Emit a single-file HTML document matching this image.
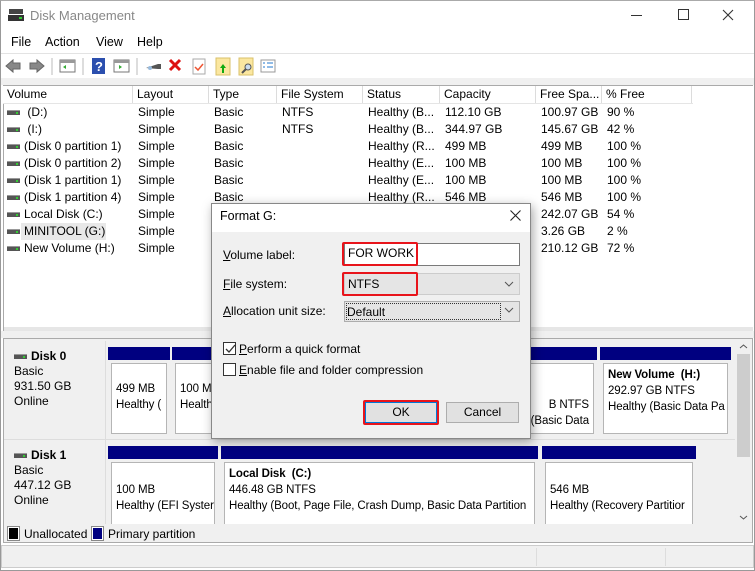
<!DOCTYPE html>
<html><head><meta charset="utf-8"><style>
*{margin:0;padding:0;box-sizing:border-box}
body{width:755px;height:571px;overflow:hidden;background:#fff;font-family:"Liberation Sans",sans-serif;font-size:12px;color:#000;position:relative}
.a{position:absolute;white-space:nowrap}
.hd{position:absolute;top:86px;height:18px;border-right:1px solid #dcdcdc;padding-left:4px;line-height:17px;background:#fff}
.row{position:absolute;left:0;width:735px;height:17px;line-height:17px}
.row span{position:absolute}
.di{display:inline-block;width:13px;height:5px;background:#555;border-top:1px solid #999;position:relative;margin-right:4px;vertical-align:middle}
.di:after{content:"";position:absolute;right:2px;top:1px;width:2px;height:2px;background:#3c3}
.bar{position:absolute;height:14px;background:#000080}
.box{position:absolute;background:#fff;border:1px solid #b5b5b5;outline:3px solid #f0f0f0;padding:3px 4px;line-height:16px;overflow:hidden;white-space:nowrap;font-size:11.5px;letter-spacing:-0.1px}
.dl{position:absolute;background:#f0f0f0;line-height:15px;padding:8px 0 0 9px}
u{text-decoration:underline}
</style></head><body>
<!-- title -->
<div class="a" style="left:8px;top:9px;width:16px;height:14px">
<div style="position:absolute;left:1px;top:0;width:14px;height:5px;background:#444"></div>
<div style="position:absolute;left:0;top:6px;width:16px;height:6px;background:#333"></div>
<div style="position:absolute;left:11px;top:8px;width:3px;height:2px;background:#3c3"></div></div>
<div class="a" style="left:30px;top:8px;font-size:13px;color:#888">Disk Management</div>
<div class="a" style="left:631px;top:15px;width:11px;height:1px;background:#333"></div>
<div class="a" style="left:678px;top:9px;width:11px;height:11px;border:1px solid #333"></div>
<svg class="a" style="left:722px;top:9px" width="12" height="12"><path d="M1 1 L11 11 M11 1 L1 11" stroke="#333" stroke-width="1.1"/></svg>
<!-- menu -->
<div class="a" style="left:11px;top:35px;font-size:12.5px">File</div>
<div class="a" style="left:45px;top:35px;font-size:12.5px">Action</div>
<div class="a" style="left:96px;top:35px;font-size:12.5px">View</div>
<div class="a" style="left:137px;top:35px;font-size:12.5px">Help</div>
<div class="a" style="left:0;top:53px;width:755px;height:1px;background:#e3e3e3"></div>
<!-- toolbar -->
<svg class="a" style="left:0;top:54px" width="300" height="24">
<path d="M6 12 l7-6 v3 h7 v6 h-7 v3z" fill="#888" stroke="#666"/>
<path d="M44 12 l-7-6 v3 h-7 v6 h7 v3z" fill="#888" stroke="#666"/>
<line x1="52" y1="4" x2="52" y2="21" stroke="#bbb"/>
<rect x="60" y="6" width="15" height="12" fill="#fff" stroke="#777"/><rect x="60" y="6" width="15" height="3" fill="#999"/><path d="M66 11 l-3 2 3 2z" fill="#3a3"/>
<line x1="83" y1="4" x2="83" y2="21" stroke="#bbb"/>
<rect x="92" y="4" width="13" height="16" fill="#2b4fae"/><text x="95" y="17" font-size="13" font-weight="bold" fill="#fff" font-family="Liberation Sans">?</text>
<rect x="114" y="6" width="15" height="12" fill="#fff" stroke="#777"/><rect x="114" y="6" width="15" height="3" fill="#999"/><path d="M119 11 l3 2 -3 2z" fill="#3a3"/>
<line x1="137" y1="4" x2="137" y2="21" stroke="#bbb"/>
<path d="M146 14 l12-4 h3 v5 h-3z" fill="#555"/><circle cx="150" cy="14" r="2" fill="#9bd"/>
<path d="M170 6 l10 10 M180 6 l-10 10" stroke="#d11" stroke-width="3"/>
<rect x="193" y="5" width="12" height="15" fill="#fff" stroke="#aaa"/><path d="M195 13 l3 3 5-6" stroke="#e53" fill="none" stroke-width="1.5"/>
<rect x="216" y="4" width="14" height="17" fill="#fbe7a0" stroke="#d9c06a"/><path d="M223 10 l-3 4 h2 v5 h2 v-5 h2z" fill="#1a1"/>
<rect x="239" y="4" width="14" height="17" fill="#fbe7a0" stroke="#d9c06a"/><circle cx="248" cy="13" r="3" fill="#cde" stroke="#555"/><line x1="246" y1="15" x2="242" y2="19" stroke="#555" stroke-width="2"/>
<rect x="261" y="6" width="14" height="12" fill="#fff" stroke="#999"/><path d="M263 9 h2 M263 13 h2 M267 9 h6 M267 13 h6" stroke="#27c"/>
</svg>
<div class="a" style="left:0;top:78px;width:755px;height:7px;background:#f0f0f0"></div>
<!-- list -->
<div class="a" style="left:3px;top:85px;width:750px;height:246px;border:1px solid #aaa;border-right:0"></div>
<div class="hd" style="left:3px;width:130px">Volume</div>
<div class="hd" style="left:133px;width:76px">Layout</div>
<div class="hd" style="left:209px;width:68px">Type</div>
<div class="hd" style="left:277px;width:86px">File System</div>
<div class="hd" style="left:363px;width:77px">Status</div>
<div class="hd" style="left:440px;width:96px">Capacity</div>
<div class="hd" style="left:536px;width:66px">Free Spa...</div>
<div class="hd" style="left:602px;width:90px">% Free</div>
<div class="a" style="left:3px;top:103px;width:690px;height:1px;background:#e5e5e5"></div>
<div class="row" style="top:104px"><span style="left:7px"><i class="di"></i>&nbsp;(D:)</span><span style="left:138px">Simple</span><span style="left:214px">Basic</span><span style="left:282px">NTFS</span><span style="left:368px">Healthy (B...</span><span style="left:445px">112.10 GB</span><span style="left:541px">100.97 GB</span><span style="left:607px">90 %</span></div>
<div class="row" style="top:121px"><span style="left:7px"><i class="di"></i>&nbsp;(I:)</span><span style="left:138px">Simple</span><span style="left:214px">Basic</span><span style="left:282px">NTFS</span><span style="left:368px">Healthy (B...</span><span style="left:445px">344.97 GB</span><span style="left:541px">145.67 GB</span><span style="left:607px">42 %</span></div>
<div class="row" style="top:138px"><span style="left:7px"><i class="di"></i>(Disk 0 partition 1)</span><span style="left:138px">Simple</span><span style="left:214px">Basic</span><span style="left:368px">Healthy (R...</span><span style="left:445px">499 MB</span><span style="left:541px">499 MB</span><span style="left:607px">100 %</span></div>
<div class="row" style="top:155px"><span style="left:7px"><i class="di"></i>(Disk 0 partition 2)</span><span style="left:138px">Simple</span><span style="left:214px">Basic</span><span style="left:368px">Healthy (E...</span><span style="left:445px">100 MB</span><span style="left:541px">100 MB</span><span style="left:607px">100 %</span></div>
<div class="row" style="top:172px"><span style="left:7px"><i class="di"></i>(Disk 1 partition 1)</span><span style="left:138px">Simple</span><span style="left:214px">Basic</span><span style="left:368px">Healthy (E...</span><span style="left:445px">100 MB</span><span style="left:541px">100 MB</span><span style="left:607px">100 %</span></div>
<div class="row" style="top:189px"><span style="left:7px"><i class="di"></i>(Disk 1 partition 4)</span><span style="left:138px">Simple</span><span style="left:214px">Basic</span><span style="left:368px">Healthy (R...</span><span style="left:445px">546 MB</span><span style="left:541px">546 MB</span><span style="left:607px">100 %</span></div>
<div class="row" style="top:206px"><span style="left:7px"><i class="di"></i>Local Disk (C:)</span><span style="left:138px">Simple</span><span style="left:541px">242.07 GB</span><span style="left:607px">54 %</span></div>
<div class="a" style="left:21px;top:223px;width:85px;height:17px;background:#e8e8e8"></div>
<div class="row" style="top:223px"><span style="left:7px"><i class="di"></i>MINITOOL (G:)</span><span style="left:138px">Simple</span><span style="left:541px">3.26 GB</span><span style="left:607px">2 %</span></div>
<div class="row" style="top:240px"><span style="left:7px"><i class="di"></i>New Volume (H:)</span><span style="left:138px">Simple</span><span style="left:541px">210.12 GB</span><span style="left:607px">72 %</span></div>
<div class="a" style="left:4px;top:327px;width:749px;height:4px;background:#e6e6e6"></div>
<div class="a" style="left:0;top:331px;width:755px;height:7px;background:#f0f0f0"></div>
<!-- graphical -->
<div class="a" style="left:3px;top:338px;width:750px;height:186px;border:1px solid #aaa;border-bottom:0;background:#fff"></div>
<div class="a" style="left:4px;top:339px;width:731px;height:185px;background:#f0f0f0"></div>
<div class="a" style="left:735px;top:339px;width:17px;height:185px;background:#f0f0f0"></div>
<div class="a" style="left:737px;top:354px;width:13px;height:103px;background:#cdcdcd"></div>
<svg class="a" style="left:739px;top:343px" width="9" height="180"><path d="M1 5 l3.5-3 3.5 3 M1 173 l3.5 3 3.5-3" stroke="#555" fill="none"/></svg>
<div class="dl" style="left:5px;top:341px;width:100px;height:97px"><b><i class="di"></i>Disk 0</b><br>Basic<br>931.50 GB<br>Online</div>
<div class="dl" style="left:5px;top:440px;width:100px;height:84px"><b><i class="di"></i>Disk 1</b><br>Basic<br>447.12 GB<br>Online</div>
<div class="a" style="left:105px;top:341px;width:1px;height:183px;background:#ddd"></div>
<div class="a" style="left:4px;top:439px;width:731px;height:1px;background:#ddd"></div>
<!-- disk0 -->
<div class="bar" style="left:108px;top:347px;width:62px"></div>
<div class="bar" style="left:172px;top:347px;width:60px"></div>
<div class="bar" style="left:520px;top:347px;width:77px"></div>
<div class="bar" style="left:600px;top:347px;width:131px"></div>
<div class="box" style="left:111px;top:363px;width:56px;height:71px;padding-top:17px">499 MB<br>Healthy (</div>
<div class="box" style="left:175px;top:363px;width:54px;height:71px;padding-top:17px">100 MB<br>Health</div>
<div class="box" style="left:500px;top:363px;width:94px;height:71px;padding-top:17px;text-align:right;padding-right:4px"><br>B NTFS<br>(Basic Data</div>
<div class="box" style="left:603px;top:363px;width:125px;height:71px;padding-top:3px"><b>New Volume&nbsp; (H:)</b><br>292.97 GB NTFS<br>Healthy (Basic Data Pa</div>
<!-- disk1 -->
<div class="bar" style="left:108px;top:446px;width:110px"></div>
<div class="bar" style="left:221px;top:446px;width:317px"></div>
<div class="bar" style="left:542px;top:446px;width:154px"></div>
<div class="box" style="left:111px;top:462px;width:104px;height:62px;padding-top:19px;border-bottom:0">100 MB<br>Healthy (EFI Syster</div>
<div class="box" style="left:224px;top:462px;width:311px;height:62px;padding-top:3px;border-bottom:0"><b>Local Disk&nbsp; (C:)</b><br>446.48 GB NTFS<br>Healthy (Boot, Page File, Crash Dump, Basic Data Partition</div>
<div class="box" style="left:545px;top:462px;width:148px;height:62px;padding-top:19px;border-bottom:0">546 MB<br>Healthy (Recovery Partitior</div>
<!-- legend -->
<div class="a" style="left:3px;top:524px;width:750px;height:19px;background:#f0f0f0;border:1px solid #aaa;border-top:0"></div>
<div class="a" style="left:8px;top:527px;width:11px;height:13px;background:#000;border:1px solid #fff;outline:1px solid #888"></div>
<div class="a" style="left:24px;top:527px">Unallocated</div>
<div class="a" style="left:92px;top:527px;width:11px;height:13px;background:#000080;border:1px solid #fff;outline:1px solid #888"></div>
<div class="a" style="left:108px;top:527px">Primary partition</div>
<div class="a" style="left:1px;top:545px;width:753px;height:23px;background:#f0f0f0;border:1px solid #ccc"></div>
<div class="a" style="left:536px;top:548px;width:1px;height:18px;background:#ddd"></div>
<div class="a" style="left:665px;top:548px;width:1px;height:18px;background:#ddd"></div>
<!-- dialog -->
<div class="a" style="left:211px;top:203px;width:320px;height:236px;background:#f0f0f0;border:1px solid #888;box-shadow:2px 3px 10px rgba(0,0,0,.35)"></div>
<div class="a" style="left:212px;top:204px;width:318px;height:28px;background:#fff"></div>
<div class="a" style="left:220px;top:209px;font-size:12.5px">Format G:</div>
<svg class="a" style="left:510px;top:210px" width="11" height="11"><path d="M0.5 0.5 L10.5 10.5 M10.5 0.5 L0.5 10.5" stroke="#222" stroke-width="1.1"/></svg>
<div class="a" style="left:223px;top:248px"><u>V</u>olume label:</div>
<div class="a" style="left:223px;top:277px"><u>F</u>ile system:</div>
<div class="a" style="left:223px;top:304px"><u>A</u>llocation unit size:</div>
<div class="a" style="left:344px;top:243px;width:176px;height:23px;background:#fff;border:1px solid #7a7a7a"></div>
<div class="a" style="left:344px;top:273px;width:176px;height:22px;background:#e5e5e5;border:1px solid #ccc"></div>
<div class="a" style="left:344px;top:301px;width:176px;height:21px;background:#e5e5e5;border:1px solid #adadad"></div>
<div class="a" style="left:346px;top:303px;width:155px;height:17px;border:1px dotted #333"></div>
<svg class="a" style="left:504px;top:279px" width="12" height="40"><path d="M1 3 l4 4 4-4 M1 29 l4 4 4-4" stroke="#555" fill="none"/></svg>
<div class="a" style="left:348px;top:246px">FOR WORK</div>
<div class="a" style="left:348px;top:277px">NTFS</div>
<div class="a" style="left:347px;top:305px">Default</div>
<div class="a" style="left:342px;top:242px;width:76px;height:24px;border:2px solid #e8141b;border-radius:2px"></div>
<div class="a" style="left:342px;top:272px;width:76px;height:24px;border:2px solid #e8141b;border-radius:2px"></div>
<div class="a" style="left:223px;top:342px;width:13px;height:13px;background:#fff;border:1px solid #333"></div>
<svg class="a" style="left:224px;top:343px" width="12" height="12"><path d="M2 6 l3 3 6-7" stroke="#333" fill="none" stroke-width="1.3"/></svg>
<div class="a" style="left:239px;top:342px"><u>P</u>erform a quick format</div>
<div class="a" style="left:223px;top:363px;width:13px;height:13px;background:#fff;border:1px solid #333"></div>
<div class="a" style="left:239px;top:363px"><u>E</u>nable file and folder compression</div>
<div class="a" style="left:365px;top:402px;width:72px;height:21px;background:#e1e1e1;border:1px solid #0078d7;text-align:center;line-height:19px">OK</div>
<div class="a" style="left:363px;top:400px;width:76px;height:25px;border:2px solid #e8141b;border-radius:2px"></div>
<div class="a" style="left:446px;top:402px;width:73px;height:21px;background:#e1e1e1;border:1px solid #adadad;text-align:center;line-height:19px">Cancel</div>
<div class="a" style="left:0;top:0;width:755px;height:571px;border:1px solid #999;border-top-color:#aaa"></div>
</body></html>
